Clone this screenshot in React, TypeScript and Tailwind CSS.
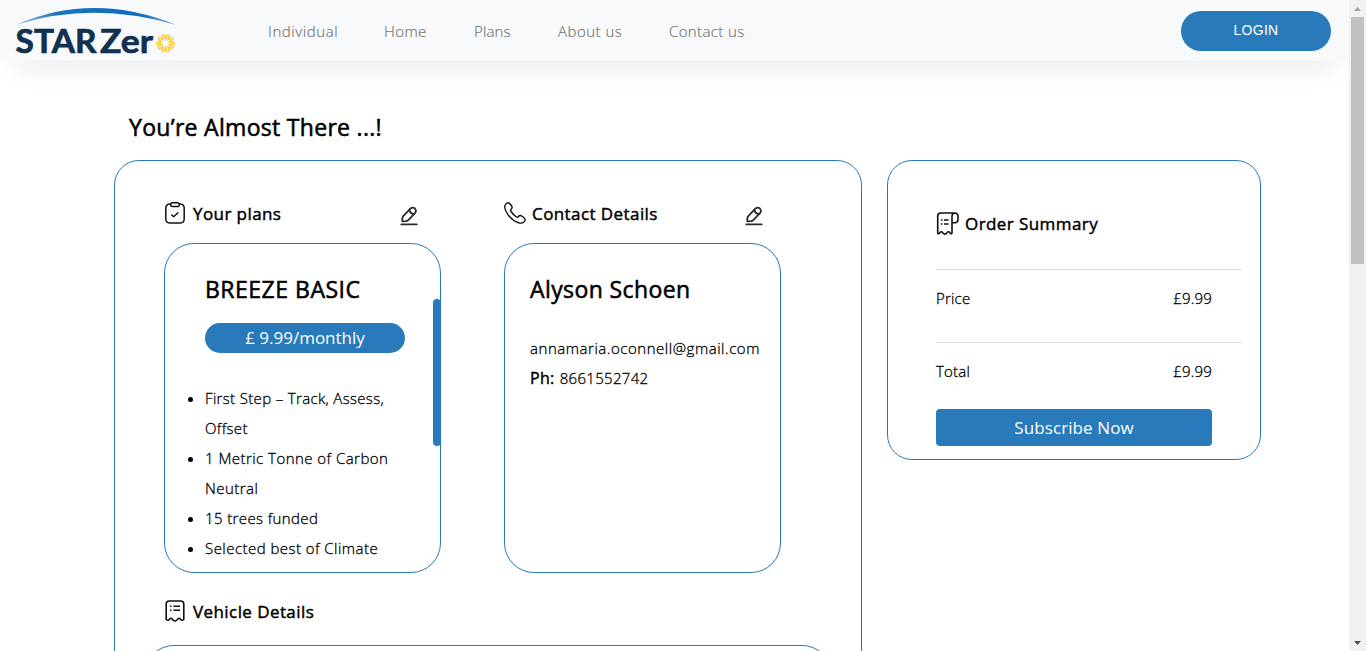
import React from "react";

const ARC = "M17 24.5 Q94 -8.5 176 25 Q94 1 17 24.5Z";

function Logo() {
  const rays = Array.from({ length: 10 }, (_, i) => i * 36);
  return (
    <svg width="180" height="61" viewBox="0 0 180 61" aria-label="STARZero">
      <defs>
        <linearGradient id="arc" x1="0" x2="1">
          <stop offset="0" stopColor="#8fb9df" />
          <stop offset="0.25" stopColor="#1c74bd" />
          <stop offset="0.75" stopColor="#0d6abb" />
          <stop offset="1" stopColor="#5b9bd0" />
        </linearGradient>
      </defs>
      <path d={ARC} fill="url(#arc)" />
      <g fill="#12304f" stroke="#12304f" strokeWidth="0.7" fontFamily="Lato, sans-serif" fontWeight="700" fontSize="33">
        <text x="15.5" y="52.5" textLength="81" lengthAdjust="spacingAndGlyphs">STAR</text>
        <text x="100" y="52.5" textLength="53" lengthAdjust="spacingAndGlyphs">Zer</text>
      </g>
      <g stroke="#fbc52d" strokeWidth="1.3" fill="none">
        {rays.map((a) => (
          <path key={a} d="M-2 -9.2 L0 -4.2 L2 -9.2" transform={`translate(165.5 43.3) rotate(${a})`} />
        ))}
      </g>
    </svg>
  );
}

function ClipboardIcon() {
  return (
    <svg width="22" height="22" viewBox="0 0 22 22" fill="none" stroke="#111" strokeWidth="1.5" strokeLinecap="round" strokeLinejoin="round">
      <path d="M6.7 2.1H5.5Q2 2.4 1.8 6V17Q2 20.9 5.5 21H16.5Q20 20.9 20.2 17V6Q20 2.4 16.5 2.1H15.3" />
      <rect x="6.7" y="0.8" width="8.6" height="3.8" rx="1.7" />
      <path d="M7.8 13L9.7 14.8L13.9 10.8" />
    </svg>
  );
}

function PhoneIcon() {
  return (
    <svg width="22" height="22" viewBox="0 0 22 22" fill="none" stroke="#111" strokeWidth="1.4" strokeLinejoin="round">
      <path d="M1.8 2.1Q3.4 0.2 5.2 1.1Q7.4 3 8.1 5Q8.2 6.2 7.3 7Q6.2 8 6.7 9Q9 12.6 12.4 15Q13.4 15.7 14.3 14.7Q15.5 13.2 16.9 13.7Q19.4 14.9 20.9 16.7Q21.6 18.2 20.2 19.7Q18.2 21.6 15.2 21Q9.2 19.2 4.3 13.2Q1.2 9 0.7 5.5Q0.6 3.5 1.8 2.1Z" />
    </svg>
  );
}

function PencilIcon() {
  return (
    <svg width="18" height="20" viewBox="0 0 18 20" fill="none" stroke="#2a2a2a" strokeWidth="1.8" strokeLinejoin="round" strokeLinecap="round">
      <path d="M2.3 15.3L2.4 11.9Q2.6 10.9 3.3 10.1L10.3 2.7Q12.6 0.7 14.9 2.5Q16.9 4.8 15 7.1L8 14.3Q7.2 15 6.2 15.2L2.3 15.3Z" />
      <path d="M9.4 3.8Q9.9 7.5 14 8" />
      <path d="M1.3 18.4H16.7" />
    </svg>
  );
}

function ReceiptIcon() {
  return (
    <svg width="22" height="22" viewBox="0 0 22 22" fill="none" stroke="#111" strokeWidth="1.6" strokeLinejoin="round">
      <path d="M2.2 19.5V4Q2.2 1 5.2 1H16.8Q19.8 1 19.8 4V19.5Q18.1 21.2 16.5 19.3Q15.1 17.4 13.7 19.2Q11 22.8 8.3 19.2Q6.9 17.4 5.5 19.3Q3.9 21.2 2.2 19.5Z" />
      <path d="M6 6.2H7.5M9.5 6.2H16M6 10.2H7.5M9.5 10.2H16" />
    </svg>
  );
}

function BillIcon() {
  return (
    <svg width="23" height="23" viewBox="0 0 23 23" fill="none" stroke="#111" strokeWidth="1.6" strokeLinejoin="round">
      <path d="M18.8 1H4.7Q1.7 1.2 1.7 4V20.5Q1.7 22.6 3.4 21.3Q5.2 18.6 6.7 20.8Q8.9 23.4 11.1 20.8Q12.6 18.6 14.3 21.3Q16 22.6 16 20.5V4Q16.2 1.2 18.8 1Q21.9 1.3 22 4V7.8Q21.8 10.6 19 10.8H16" />
      <path d="M4.9 8H6.5M8 8H12.6M4.9 12H6.5M8 12H12.6" />
    </svg>
  );
}

const heading = "whitespace-nowrap text-[17px] font-normal leading-6 tracking-[0.42px] [-webkit-text-stroke:0.45px_#000]";
const title = "whitespace-nowrap text-[23px] font-normal leading-[36px] [-webkit-text-stroke:0.55px_#000]";
const body = "text-[15px] font-light [-webkit-text-stroke:0.3px_#000]";

export default function App() {
  return (
    <div className="flex h-[651px] w-[1366px] overflow-hidden bg-white font-['Open_Sans','Noto_Sans',sans-serif] text-black">
      <div className="flex h-full w-[1349px] flex-col overflow-hidden">
        <header className="flex h-[61px] shrink-0 items-center bg-[#f8f9fb] pr-[18px] shadow-[0_20px_30px_-15px_rgba(2,25,22,0.1)]">
          <Logo />
          <nav className="ml-[88px] flex h-full items-center gap-[47px] whitespace-nowrap pt-[2px] text-[15px] font-light text-[#707070] [-webkit-text-stroke:0.15px_#707070]">
            <a className="w-[70px] tracking-[0.6px]">Individual</a>
            <a className="-ml-px w-[43px] tracking-[0.4px]">Home</a>
            <a className="w-[37px] tracking-[0.15px]">Plans</a>
            <a className="w-[64px] tracking-[0.48px]">About us</a>
            <a className="w-[77px] tracking-[0.38px]">Contact us</a>
          </nav>
          <button className="ml-auto h-10 w-[150px] rounded-full bg-[#297aba] font-['Liberation_Sans',sans-serif] text-[14px] tracking-[0.25px] text-white">LOGIN</button>
        </header>

        <main className="pl-[114px]">
          <h1 className={`${title} mt-[48px] pl-[15px] tracking-[0.3px]`}>You’re Almost There ...!</h1>
          <div className="mt-[15px] flex items-start gap-[25px]">
            <section className="h-[700px] w-[748px] rounded-[25px] border border-[#297aba] px-[49px] pt-[40px]">
              <div className="flex gap-[63px]">
                <div className="w-[277px]">
                  <div className="flex h-[42px] items-start">
                    <div className="flex items-start gap-[7px] pt-px"><ClipboardIcon /><h2 className={heading}>Your plans</h2></div>
                    <div className="ml-auto mr-[23px] mt-[5px]"><PencilIcon /></div>
                  </div>
                  <div className="flex h-[330px] rounded-[30px] border border-[#297aba] pl-[40px]">
                    <div className="w-[200px] shrink-0 pt-[27px]">
                      <h3 className={`${title} tracking-[0.5px]`}>BREEZE BASIC</h3>
                      <div className="mt-[16px] h-[30px] rounded-full bg-[#297aba] text-center text-[17px] leading-[30px] text-white">£ 9.99/monthly</div>
                      <ul className={`${body} mt-[30px] list-disc whitespace-nowrap leading-[30px] tracking-[0.46px]`}>
                        <li className="tracking-[0.34px]">First Step – Track, Assess,<br />Offset</li>
                        <li>1 Metric Tonne of Carbon<br />Neutral</li>
                        <li className="tracking-[0.38px]">15 trees funded</li>
                        <li>Selected best of Climate</li>
                      </ul>
                    </div>
                    <div className="-mr-px ml-auto mt-[55px] h-[147px] w-[8px] shrink-0 rounded-full bg-[#297aba]" />
                  </div>
                </div>
                <div className="w-[277px]">
                  <div className="flex h-[42px] items-start">
                    <div className="flex items-start gap-[6px] pt-px"><PhoneIcon /><h2 className={heading}>Contact Details</h2></div>
                    <div className="ml-auto mr-[18px] mt-[5px]"><PencilIcon /></div>
                  </div>
                  <div className="h-[330px] whitespace-nowrap rounded-[30px] border border-[#297aba] pl-[25px] pt-[27px]">
                    <h3 className={`${title} tracking-[0.4px]`}>Alyson Schoen</h3>
                    <p className={`${body} mt-[26px] leading-[30px] tracking-[0.54px]`}>annamaria.oconnell@gmail.com</p>
                    <p className={`${body} leading-[31px] tracking-[0.3px]`}><span className="mr-px text-[16px] font-normal [-webkit-text-stroke:0.45px_#000]">Ph:</span> 8661552742</p>
                  </div>
                </div>
              </div>
              <div className="mt-[26px] flex h-[24px] items-start gap-[7px] pt-px"><ReceiptIcon /><h2 className={heading}>Vehicle Details</h2></div>
              <div className="-ml-[20px] mt-[22px] h-[200px] w-[688px] rounded-[30px] border border-[#297aba]" />
            </section>

            <aside className="h-[300px] w-[374px] rounded-[25px] border border-[#297aba] pl-[48px] pt-[51px]">
              <div className="flex h-[57px] items-start gap-[6px]"><BillIcon /><h2 className={heading}>Order Summary</h2></div>
              <div className={`${body} w-[306px] tracking-[0.2px]`}>
                <div className="flex h-[73px] justify-between border-t border-[#dfdfdf] pr-[30px] pt-[13px] leading-[30px]"><span>Price</span><span>£9.99</span></div>
                <div className="flex h-[67px] justify-between border-t border-[#dfdfdf] pr-[30px] pt-[13px] leading-[30px]"><span>Total</span><span>£9.99</span></div>
              </div>
              <button className="h-[37px] w-[276px] rounded-[4px] bg-[#297aba] text-[17px] tracking-[0.1px] text-white">Subscribe Now</button>
            </aside>
          </div>
        </main>
      </div>

      <div className="flex h-full w-[17px] flex-col items-center bg-[#f1f1f1]">
        <div className="flex h-[17px] items-center"><svg width="7" height="4" viewBox="0 0 7 4"><path d="M0 4L3.5 0L7 4Z" fill="#a3a3a3" /></svg></div>
        <div className="h-[247px] w-[13px] bg-[#c1c1c1]" />
        <div className="mt-auto flex h-[17px] items-center"><svg width="7" height="4" viewBox="0 0 7 4"><path d="M0 0H7L3.5 4Z" fill="#505050" /></svg></div>
      </div>
    </div>
  );
}
